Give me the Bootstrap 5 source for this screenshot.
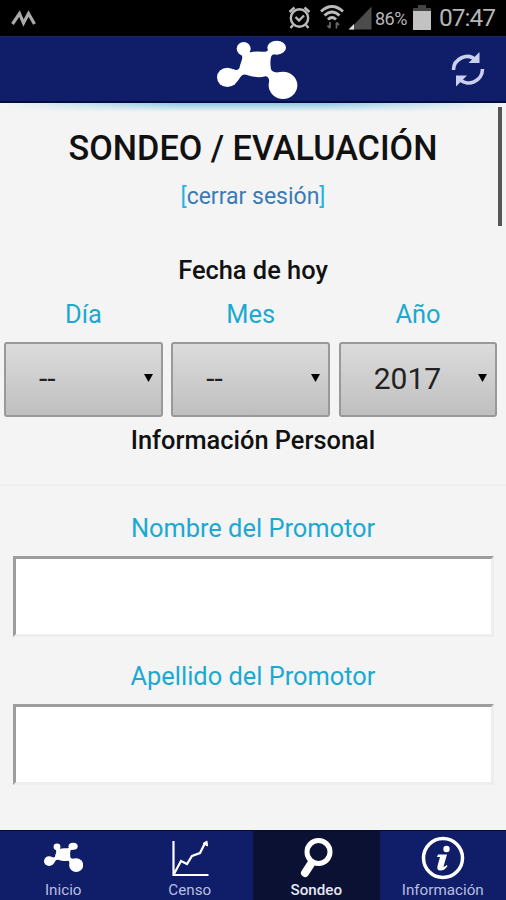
<!DOCTYPE html>
<html lang="es">
<head>
<meta charset="utf-8">
<meta name="viewport" content="width=device-width, initial-scale=1">
<title>Sondeo / Evaluación</title>
<link href="https://cdn.jsdelivr.net/npm/bootstrap@5.3.0/dist/css/bootstrap.min.css" rel="stylesheet">
<style>
html, body { height: 900px; overflow: hidden; }
body { font-family: Roboto, "Liberation Sans", sans-serif; background: #f4f4f4; color: #111; }
svg { display: block; flex: none; }
.statusbar { height: 36px; background: #000; color: #b5b5b5; }
.statusbar .pct { font-size: 18px; line-height: 36px; width: 33px; letter-spacing: -.5px; padding-top: 1px; }
.statusbar .clock { font-size: 24.5px; line-height: 36px; letter-spacing: -1px; padding: 0 0 0 1px; }
.appbar { height: 67px; background: #101e69; border-bottom: 2px solid #030b45; border-top: 1px solid #20285f; }
.glow { height: 9px; background: linear-gradient(to bottom, transparent, #f4f4f4), linear-gradient(to right, #f4f4f4, #8acbe4 35%, #8acbe4 65%, #f4f4f4); }
.scroll-thumb { right: 4px; top: 107px; width: 4px; height: 119px; background: #555; }
.screen-title { font-size: 34.2px; line-height: 40px; font-weight: 500; margin-top: 16px; }
.logout { font-size: 23px; line-height: 30px; margin-top: 14px; color: #1fb5de; }
.logout a { color: #3b7ab8; }
.section-title { font-size: 25.4px; line-height: 32px; font-weight: 500; }
.date-title { margin-top: 42px; }
.info-title { margin-top: 7px; }
.field-label { font-size: 25.4px; line-height: 32px; color: #1ba9d2; }
.date-row { padding: 0 8.5px 0 4px; gap: 8.5px; }
.picker { height: 75px; border: 2px solid #999; border-radius: 3px; background: linear-gradient(#dcdcdc, #bfbfbf); font-size: 30px; padding: 0 8px 3px 33px; color: #222; }
.rule { height: 2px; background: #efefef; margin-top: 28px; }
.first-field { margin-top: 26px; }
.next-field { margin-top: 23px; }
.entry { height: 81px; width: 481px; margin-top: 12px; border: 3px solid; border-color: #9b9e9d #eee #eee #9b9e9d; border-radius: 0; background: #fff; padding: 0; }
.tabs { height: 70px; background: #101e69; border-top: 1px solid #050d3c; }
.tabs .tab { color: #b9bfe0; font-size: 15.2px; line-height: 18px; text-decoration: none; padding-top: 4px; }
.tabs .tab.current { background: #0a1133; color: #e6e8f5; font-weight: 500; }
</style>
<script src="https://cdn.jsdelivr.net/npm/bootstrap@5.3.0/dist/js/bootstrap.bundle.min.js"></script>
</head>
<body class="d-flex flex-column position-relative">
<svg width="0" height="0" class="position-absolute"><defs>
<symbol id="molecule" viewBox="15 3 246 192" preserveAspectRatio="none"><g fill="#fff">
<ellipse cx="95" cy="38" rx="21" ry="20"/><ellipse cx="194" cy="35" rx="28" ry="21"/><ellipse cx="46" cy="124" rx="31" ry="29"/><ellipse cx="213" cy="148" rx="43" ry="41"/>
<path d="M80 50Q94 58 90 70Q84 88 82 97Q76 106 62 98L66 147Q80 132 86 122Q92 113 102 116Q135 128 160 121Q174 120 172 150L215 108Q184 114 177 100Q173 75 178 60Q182 52 200 55L168 36Q172 48 150 47Q128 45 116 49Q108 50 114 40Z"/></g></symbol>
</defs></svg>

<div class="statusbar d-flex align-items-center flex-shrink-0">
  <svg width="288" height="36" viewBox="0 0 288 36"><path d="M12.500 24l7-10.500 4 9.500 5-9.500 6 10.500" fill="none" stroke="#aaa" stroke-width="3.200"/></svg>
  <svg width="87" height="36" viewBox="288 0 87 36" fill="none" stroke="#bbb" stroke-width="2.400">
    <circle cx="299.500" cy="18" r="8.700"/><path d="M295.500 17l3.500 3.500 5-5M289.500 12l5-4.500M304.500 7.500l5 4.500M293 25l-2.500 3M306 25l2.500 3"/>
    <path d="M321 11.500q11-10 22 0M324.500 15.500q7.500-7 15 0M328 19.500q4-4 8 0" stroke-width="2.800"/>
    <path d="M330 22v6M327.500 25.500l2.500 2.500M336.500 28.500v-6M339 25l-2.500-2.500" stroke="#666" stroke-width="1.800"/>
    <path d="M371.500 6.500v23h-22z" fill="#4c4c4c" stroke="none"/><path d="M354 24v5.500h-5.500z" fill="#ddd" stroke="none"/>
  </svg>
  <span class="pct">86%</span>
  <svg width="30" height="36" viewBox="408 0 30 36"><path d="M418 5h8v3h5v4h-18V8h5z" fill="#444"/><path d="M413 11h18v19h-18z" fill="#c2c2c2"/></svg>
  <span class="clock">07:47</span>
</div>

<header class="appbar d-flex flex-shrink-0">
  <svg width="217" height="64"></svg>
  <svg width="82" height="64"><use href="#molecule" width="82" height="64"/></svg>
  <svg class="ms-auto me-3" width="42" height="64" viewBox="448 37 42 64"><g fill="none" stroke="#c9d0f0" stroke-width="3.600"><path d="M453.500 70c0-11 14-18.500 23-9.500M482.500 69c0 12-15 19-23.500 9.500"/></g><path fill="#c9d0f0" d="M479.500 52v11h-11zM456 86.500v-11h11z"/></svg>
</header>

<main class="flex-grow-1 text-center overflow-hidden">
  <div class="glow"></div>
  <h1 class="screen-title mb-0">SONDEO / EVALUACIÓN</h1>
  <div class="logout">[<a href="#" class="text-decoration-none">cerrar sesión</a>]</div>
  <h2 class="section-title date-title mb-0">Fecha de hoy</h2>
  <div class="date-row d-flex mt-2 pt-1">
    <div class="flex-fill w-100"><div class="field-label mb-2 pb-1">Día</div><div class="picker d-flex align-items-center"><span>--</span><svg class="ms-auto" width="9" height="8"><path d="M0 0h9L4.500 8z"/></svg></div></div>
    <div class="flex-fill w-100"><div class="field-label mb-2 pb-1">Mes</div><div class="picker d-flex align-items-center"><span>--</span><svg class="ms-auto" width="9" height="8"><path d="M0 0h9L4.500 8z"/></svg></div></div>
    <div class="flex-fill w-100"><div class="field-label mb-2 pb-1">Año</div><div class="picker d-flex align-items-center"><span>2017</span><svg class="ms-auto" width="9" height="8"><path d="M0 0h9L4.500 8z"/></svg></div></div>
  </div>
  <h2 class="section-title info-title mb-0">Información Personal</h2>
  <div class="rule"></div>
  <div class="field-label first-field">Nombre del Promotor</div>
  <input class="entry form-control mx-auto" aria-label="Nombre del Promotor">
  <div class="field-label next-field">Apellido del Promotor</div>
  <input class="entry form-control mx-auto" aria-label="Apellido del Promotor">
</main>

<nav class="tabs d-flex flex-shrink-0">
  <a href="#" class="tab flex-fill w-100 d-flex flex-column align-items-center"><svg width="40" height="46" viewBox="0 0 40 46"><use href="#molecule" x="1" y="6" width="40" height="32"/></svg>Inicio</a>
  <a href="#" class="tab flex-fill w-100 d-flex flex-column align-items-center"><svg width="40" height="46" viewBox="170 835 40 46" fill="none" stroke="#fff" stroke-width="2.200"><path d="M173.500 841v34h35M174 874l7-13 6 3 5-8 8-3 5-10"/><path d="M207 841l.5 5-4.500-2.500z" fill="#fff" stroke-width="1"/></svg>Censo</a>
  <a href="#" class="tab current flex-fill w-100 d-flex flex-column align-items-center"><svg width="40" height="46" viewBox="296 835 40 46" fill="none" stroke="#fff"><circle cx="318.500" cy="852" r="11.500" stroke-width="5"/><path d="M311.500 863l-6.500 10" stroke-width="8" stroke-linecap="round"/></svg>Sondeo</a>
  <a href="#" class="tab flex-fill w-100 d-flex flex-column align-items-center"><svg width="44" height="46" viewBox="421 835 44 46"><circle cx="443" cy="858" r="19.500" fill="none" stroke="#fff" stroke-width="3.500"/><circle cx="446.500" cy="849" r="3.200" fill="#fff"/><path d="M438 854.500h9l-3.500 12q1 1 3-1.500l1 1q-3 4.500-7 4.500-4 0-3-4.500l2.500-9h-3z" fill="#fff"/></svg>Información</a>
</nav>
<div class="scroll-thumb position-absolute"></div>
</body>
</html>
